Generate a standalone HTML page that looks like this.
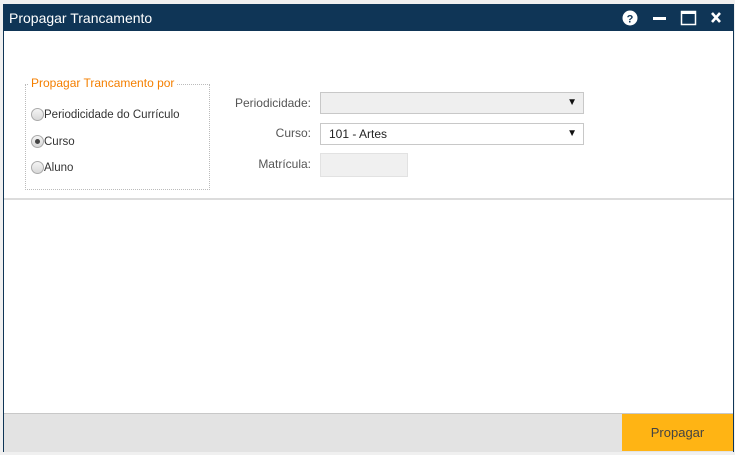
<!DOCTYPE html>
<html><head><meta charset="utf-8"><style>
body{margin:0;width:735px;height:455px;background:#f0f0f0;font-family:"Segoe UI","Liberation Sans",sans-serif;position:relative;overflow:hidden}
.win{position:absolute;left:3px;top:4px;width:729px;height:446px;border:1px solid #0f3556;background:#fff}
.tb{position:absolute;left:0;top:0;width:729px;height:26px;background:#0f3556;color:#fff;font-size:14px;line-height:26px}
.tb span{position:absolute;left:5px}
.a{position:absolute}
.lbl{position:absolute;font-size:12px;color:#555;text-align:right;width:100px}
.sel{position:absolute;left:316px;width:262px;height:20px;border:1px solid #c8c8c8;font-size:12px;line-height:20px;color:#222}
.sel i{position:absolute;right:6px;top:0;font-style:normal;font-size:10px;color:#111}
.rad{position:absolute;left:27px;width:11px;height:11px;border:1px solid #aaa;border-radius:50%;background:linear-gradient(#f4f4f4,#d8d8d8)}
.rt{position:absolute;left:40px;font-size:11.5px;color:#333}
</style></head><body>
<div class="win">
<div class="tb"><span>Propagar Trancamento</span>
<svg class="a" style="left:617px;top:5px" width="110" height="16">
<circle cx="9" cy="8" r="7.5" fill="#fff"/><text x="9" y="12.5" font-size="11" font-weight="bold" text-anchor="middle" fill="#0f3556" font-family="Liberation Sans">?</text>
<rect x="32" y="7" width="13" height="3" fill="#fff"/>
<rect x="60.5" y="1.5" width="14" height="13" fill="none" stroke="#fff" stroke-width="1.5"/><rect x="60" y="1" width="15" height="3" fill="#fff"/>
<path d="M91 3 L99 12 M99 3 L91 12" stroke="#fff" stroke-width="2.6"/>
</svg></div>
<div class="a" style="left:21px;top:79px;width:183px;height:104px;border:1px dotted #bbb"></div>
<div class="a" style="left:24px;top:71px;background:#fff;padding:0 3px;color:#f47f00;font-size:12px">Propagar Trancamento por</div>
<div class="rad" style="top:103px"></div><div class="rt" style="top:104px">Periodicidade do Currículo</div>
<div class="rad" style="top:130px"><div style="position:absolute;left:3px;top:3px;width:5px;height:5px;border-radius:50%;background:#444"></div></div><div class="rt" style="top:131px">Curso</div>
<div class="rad" style="top:156px"></div><div class="rt" style="top:157px">Aluno</div>
<div class="lbl" style="left:207px;top:91px">Periodicidade:</div>
<div class="lbl" style="left:207px;top:121px">Curso:</div>
<div class="lbl" style="left:207px;top:152px">Matrícula:</div>
<div class="sel" style="top:87px;background:#efefef"><i>▼</i></div>
<div class="sel" style="top:118px;background:#fff"><span style="padding-left:8px">101 - Artes</span><i>▼</i></div>
<div class="a" style="left:316px;top:148px;width:86px;height:22px;border:1px solid #e2e2e2;background:#f0f0f0"></div>
<div class="a" style="left:0;top:193px;width:729px;height:2px;background:#dcdcdc"></div>
<div class="a" style="left:0;top:408px;width:729px;height:38px;background:#e3e3e3;border-top:1px solid #c8c8c8"></div>
<div class="a" style="left:618px;top:409px;width:111px;height:37px;background:#ffb414;color:#444;font-size:13px;line-height:37px;text-align:center">Propagar</div>
</div>
</body></html>
